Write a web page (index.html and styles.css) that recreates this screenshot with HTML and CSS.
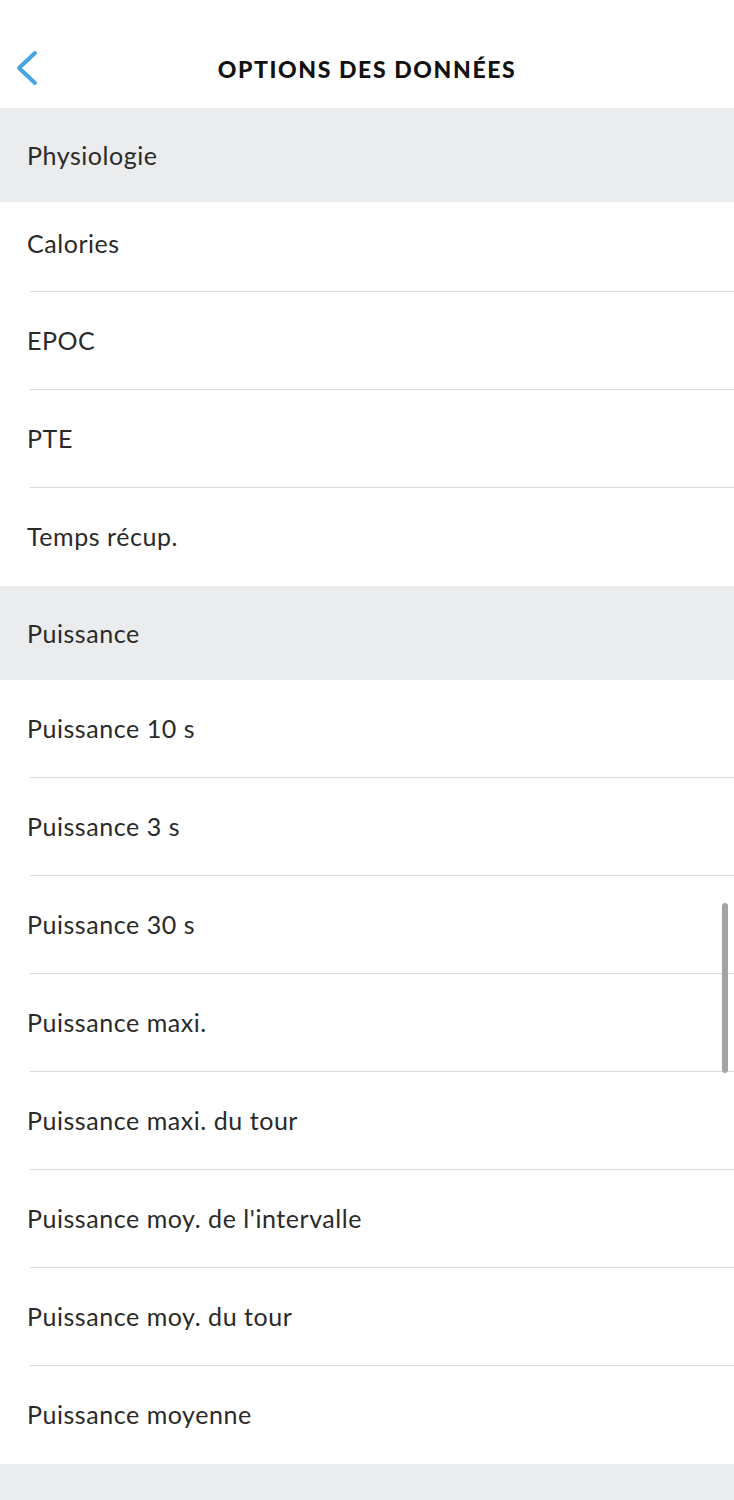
FILE: index.html
```html
<!DOCTYPE html>
<html lang="fr">
<head>
<meta charset="utf-8">
<link rel="stylesheet" href="styles.css">
</head>
<body>
<div class="page">
  <header class="topbar">
    <span class="back">
      <svg width="28" height="36" viewBox="0 0 28 36"><polyline points="20,3 4,18 20,33" fill="none" stroke="#45a6df" stroke-width="4" stroke-linecap="round" stroke-linejoin="round"/></svg>
    </span>
    <h1 class="title">OPTIONS DES DONNÉES</h1>
  </header>
  <div class="section">Physiologie</div>
  <div class="row first">Calories</div>
  <div class="row">EPOC</div>
  <div class="row">PTE</div>
  <div class="row last">Temps récup.</div>
  <div class="section">Puissance</div>
  <div class="row">Puissance 10 s</div>
  <div class="row">Puissance 3 s</div>
  <div class="row">Puissance 30 s</div>
  <div class="row">Puissance maxi.</div>
  <div class="row">Puissance maxi. du tour</div>
  <div class="row">Puissance moy. de l'intervalle</div>
  <div class="row">Puissance moy. du tour</div>
  <div class="row last">Puissance moyenne</div>
  <div class="section tail"></div>
  <div class="scrollbar"></div>
</div>
</body>
</html>
```
FILE: styles.css
```css
* { box-sizing: border-box; }
html, body { margin: 0; padding: 0; background: #fff; }
.page {
  position: relative;
  width: 734px;
  height: 1500px;
  overflow: hidden;
  font-family: "Lato", "Open Sans", sans-serif;
  color: #2a2a2a;
}
.topbar {
  position: relative;
  height: 108px;
  display: flex;
  align-items: center;
  justify-content: center;
}
.back {
  position: absolute;
  left: 15px;
  top: 50px;
  width: 28px;
  height: 36px;
}
.back svg { display: block; }
.title {
  margin: 0;
  padding-top: 30px;
  font-size: 23px;
  font-weight: 900;
  color: #111;
  letter-spacing: 1.6px;
}
.section {
  height: 94px;
  background: #ebecee;
  display: flex;
  align-items: center;
  padding-left: 27px;
  font-size: 25px;
  letter-spacing: 0.55px;
}
.section.tail { height: 40px; }
.row {
  height: 98px;
  display: flex;
  align-items: center;
  padding-left: 27px;
  padding-bottom: 2px;
  font-size: 25px;
  letter-spacing: 0.55px;
  position: relative;
}
.row::after {
  content: "";
  position: absolute;
  left: 30px;
  right: 0;
  bottom: 0;
  height: 1px;
  background: #dadada;
}
.row.last::after { display: none; }
.row.first { height: 90px; padding-bottom: 8px; }
.scrollbar {
  position: absolute;
  right: 6px;
  top: 903px;
  width: 6px;
  height: 170px;
  border-radius: 3px;
  background: #a3a3a3;
}
```
